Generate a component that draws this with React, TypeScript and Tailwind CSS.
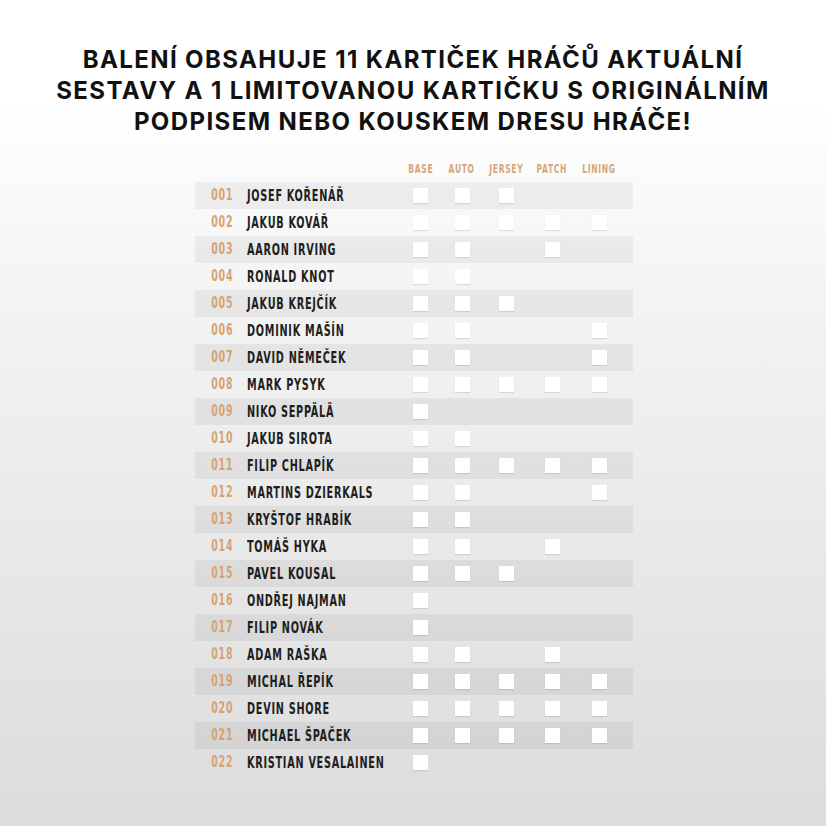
import React from 'react';

type Player = { no: string; name: string; cards: number[] };

// card columns: 0 base, 1 auto, 2 jersey, 3 patch, 4 lining
const players: Player[] = [
  { no: '001', name: 'JOSEF KOŘENÁŘ', cards: [0, 1, 2] },
  { no: '002', name: 'JAKUB KOVÁŘ', cards: [0, 1, 2, 3, 4] },
  { no: '003', name: 'AARON IRVING', cards: [0, 1, 3] },
  { no: '004', name: 'RONALD KNOT', cards: [0, 1] },
  { no: '005', name: 'JAKUB KREJČÍK', cards: [0, 1, 2] },
  { no: '006', name: 'DOMINIK MAŠÍN', cards: [0, 1, 4] },
  { no: '007', name: 'DAVID NĚMEČEK', cards: [0, 1, 4] },
  { no: '008', name: 'MARK PYSYK', cards: [0, 1, 2, 3, 4] },
  { no: '009', name: 'NIKO SEPPÄLÄ', cards: [0] },
  { no: '010', name: 'JAKUB SIROTA', cards: [0, 1] },
  { no: '011', name: 'FILIP CHLAPÍK', cards: [0, 1, 2, 3, 4] },
  { no: '012', name: 'MARTINS DZIERKALS', cards: [0, 1, 4] },
  { no: '013', name: 'KRYŠTOF HRABÍK', cards: [0, 1] },
  { no: '014', name: 'TOMÁŠ HYKA', cards: [0, 1, 3] },
  { no: '015', name: 'PAVEL KOUSAL', cards: [0, 1, 2] },
  { no: '016', name: 'ONDŘEJ NAJMAN', cards: [0] },
  { no: '017', name: 'FILIP NOVÁK', cards: [0] },
  { no: '018', name: 'ADAM RAŠKA', cards: [0, 1, 3] },
  { no: '019', name: 'MICHAL ŘEPÍK', cards: [0, 1, 2, 3, 4] },
  { no: '020', name: 'DEVIN SHORE', cards: [0, 1, 2, 3, 4] },
  { no: '021', name: 'MICHAEL ŠPAČEK', cards: [0, 1, 2, 3, 4] },
  { no: '022', name: 'KRISTIAN VESALAINEN', cards: [0] },
];

const columns = [
  { label: 'BASE', w: 'w-[41px]' },
  { label: 'AUTO', w: 'w-[42px]' },
  { label: 'JERSEY', w: 'w-[46px]' },
  { label: 'PATCH', w: 'w-[46px]' },
  { label: 'LINING', w: 'w-[48px]' },
];

const cond = "font-['DejaVu_Sans_Condensed','DejaVu_Sans',sans-serif] font-bold font-stretch-condensed";

const Box = () => (
  <div className="w-[15px] h-[15px] bg-white shadow-[0_1px_1px_rgba(0,0,0,0.1)]" />
);

export default function App() {
  return (
    <div className="min-h-screen w-full bg-[linear-gradient(to_bottom,#ffffff_12%,#f4f4f4_35%,#dcdcdc_100%)] flex flex-col items-center pt-[44px]">
      {/* Heading */}
      <h1 className="font-['Inter','Liberation_Sans',sans-serif] font-bold text-[24px] leading-[31px] tracking-[1.4px] text-[#111] text-center">
        BALENÍ OBSAHUJE 11 KARTIČEK HRÁČŮ AKTUÁLNÍ
        <br />
        SESTAVY A 1 LIMITOVANOU KARTIČKU S ORIGINÁLNÍM
        <br />
        PODPISEM NEBO KOUSKEM DRESU HRÁČE!
      </h1>

      {/* Checklist */}
      <div className="mt-[18px] w-[438px] translate-x-[1px]">
        <div className="flex h-[27px] items-center">
          <div className="w-[205px]" />
          {columns.map((c) => (
            <div key={c.label} className={`${c.w} flex justify-center`}>
              <span className={`${cond} inline-block text-[12px] tracking-[1px] text-[#d5a677] scale-x-[0.7]`}>
                {c.label}
              </span>
            </div>
          ))}
        </div>

        {players.map((p, i) => (
          <div
            key={p.no}
            className={`flex h-[27px] items-center ${i % 2 === 0 ? 'bg-black/[0.05]' : ''}`}
          >
            <div className="w-[38px] flex justify-end">
              <span className={`${cond} inline-block origin-right text-[15px] tracking-[1px] text-[#d6a271] scale-x-[0.7]`}>
                {p.no}
              </span>
            </div>
            <div className="ml-[14px] w-[153px] whitespace-nowrap">
              <span className={`${cond} inline-block origin-left text-[15px] tracking-[1px] text-[#1e1e1e] scale-x-[0.72]`}>
                {p.name}
              </span>
            </div>
            {columns.map((c, ci) => (
              <div key={c.label} className={`${c.w} flex justify-center`}>
                {p.cards.includes(ci) && <Box />}
              </div>
            ))}
            <div className="w-[10px]" />
          </div>
        ))}
      </div>
    </div>
  );
}
